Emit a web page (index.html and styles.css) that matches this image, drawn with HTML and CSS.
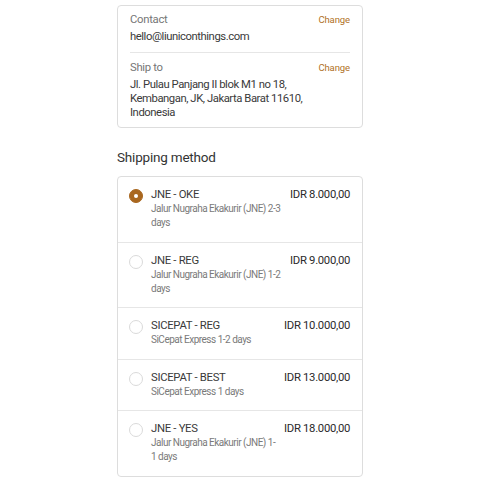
FILE: index.html
```html
<!DOCTYPE html>
<html lang="en">
<head>
    <meta charset="UTF-8">
    <meta name="viewport" content="width=device-width, initial-scale=1.0">
    <title>Checkout - Shipping</title>
    <link rel="stylesheet" href="styles.css">
</head>
<body>

<div class="container">
    <div class="summary">
        <div class="summary-row">
            <div class="summary-info">
                <div class="summary-label">Contact</div>
                <div class="summary-value">hello@liuniconthings.com</div>
            </div>
            <a class="change" href="#">Change</a>
        </div>
        <div class="summary-row">
            <div class="summary-info">
                <div class="summary-label">Ship to</div>
                <div class="summary-value">Jl. Pulau Panjang II blok M1 no 18, Kembangan, JK, Jakarta Barat 11610, Indonesia</div>
            </div>
            <a class="change" href="#">Change</a>
        </div>
    </div>

    <h2>Shipping method</h2>
    <div class="methods">
        <label class="method">
            <input type="radio" name="shipping" checked>
            <span class="radio"></span>
            <span class="method-info">
                <span class="method-name">JNE - OKE</span>
                <span class="method-desc">Jalur Nugraha Ekakurir (JNE) 2-3 days</span>
            </span>
            <span class="method-price">IDR 8.000,00</span>
        </label>
        <label class="method">
            <input type="radio" name="shipping">
            <span class="radio"></span>
            <span class="method-info">
                <span class="method-name">JNE - REG</span>
                <span class="method-desc">Jalur Nugraha Ekakurir (JNE) 1-2 days</span>
            </span>
            <span class="method-price">IDR 9.000,00</span>
        </label>
        <label class="method">
            <input type="radio" name="shipping">
            <span class="radio"></span>
            <span class="method-info">
                <span class="method-name">SICEPAT - REG</span>
                <span class="method-desc">SiCepat Express 1-2 days</span>
            </span>
            <span class="method-price">IDR 10.000,00</span>
        </label>
        <label class="method">
            <input type="radio" name="shipping">
            <span class="radio"></span>
            <span class="method-info">
                <span class="method-name">SICEPAT - BEST</span>
                <span class="method-desc">SiCepat Express 1 days</span>
            </span>
            <span class="method-price">IDR 13.000,00</span>
        </label>
        <label class="method">
            <input type="radio" name="shipping">
            <span class="radio"></span>
            <span class="method-info">
                <span class="method-name">JNE - YES</span>
                <span class="method-desc">Jalur Nugraha Ekakurir (JNE) 1-<wbr>1 days</span>
            </span>
            <span class="method-price">IDR 18.000,00</span>
        </label>
    </div>
</div>

</body>
</html>
```

FILE: styles.css
```css
body {
    margin: 0;
    font-family: Roboto, "Liberation Sans", Arial, sans-serif;
    background-color: #fff;
    color: #333;
}
.container {
    width: 246px;
    margin: 5px auto 0;
}
.summary {
    border: 1px solid #ddd;
    border-radius: 4px;
    padding: 0 12px;
}
.summary-row {
    display: flex;
    justify-content: space-between;
    align-items: flex-start;
    gap: 10px;
    padding: 7px 0 8px;
}
.summary-row + .summary-row {
    border-top: 1px solid #e6e6e6;
    padding: 8px 0 7px;
}
.summary-label {
    font-size: 11.3px;
    line-height: 14px;
    letter-spacing: -0.3px;
    color: #767676;
    margin-bottom: 3px;
}
.summary-value {
    font-size: 11.3px;
    line-height: 14px;
    letter-spacing: -0.45px;
    color: #3a3a3a;
}
.change {
    font-size: 9.5px;
    line-height: 14px;
    letter-spacing: -0.1px;
    color: #b0711f;
    text-decoration: none;
    white-space: nowrap;
}
h2 {
    font-size: 13.5px;
    font-weight: normal;
    letter-spacing: -0.2px;
    color: #333;
    margin: 20px 0 10px;
    line-height: 18px;
}
.methods {
    border: 1px solid #ddd;
    border-radius: 4px;
}
.method {
    display: flex;
    align-items: flex-start;
    gap: 8px;
    padding: 11px 12px 11.5px 11px;
    cursor: pointer;
}
.method + .method {
    border-top: 1px solid #e6e6e6;
}
.method input {
    display: none;
}
.radio {
    flex: none;
    width: 12px;
    height: 12px;
    margin-top: 1px;
    border: 1px solid #dadada;
    border-radius: 50%;
    position: relative;
}
.method input:checked + .radio {
    background-color: #a9671f;
    border-color: #a9671f;
}
.method input:checked + .radio::after {
    content: "";
    position: absolute;
    top: 4px;
    left: 4px;
    width: 4px;
    height: 4px;
    border-radius: 50%;
    background-color: #fff;
}
.method-info {
    flex: 1;
    display: flex;
    flex-direction: column;
}
.method-name {
    font-size: 11.3px;
    line-height: 14px;
    letter-spacing: -0.3px;
    color: #3a3a3a;
}
.method-desc {
    font-size: 10px;
    line-height: 14px;
    letter-spacing: -0.5px;
    color: #7a7a7a;
}
.method-price {
    font-size: 11.3px;
    line-height: 14px;
    letter-spacing: -0.3px;
    color: #2a2a2a;
    white-space: nowrap;
}
```
